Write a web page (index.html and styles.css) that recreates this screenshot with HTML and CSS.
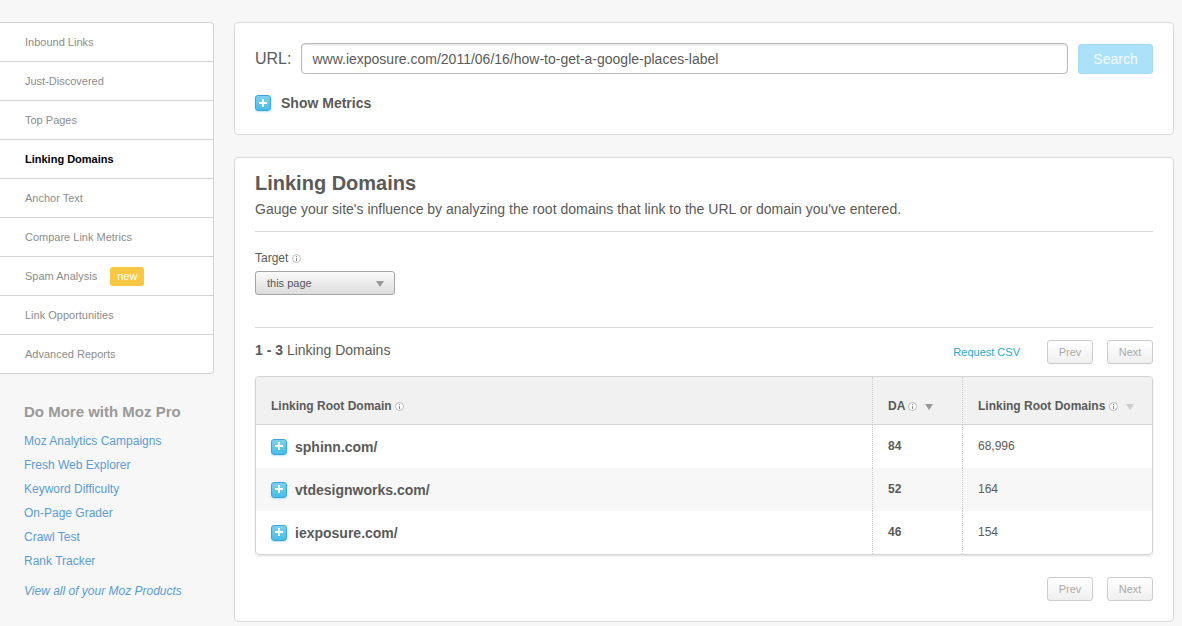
FILE: index.html
```html
<!DOCTYPE html>
<html lang="en">
<head>
<meta charset="utf-8">
<title>Linking Domains</title>
<meta name="viewport" content="width=device-width, initial-scale=1">
<link rel="stylesheet" href="styles.css">
</head>
<body>
<svg class="sprite" aria-hidden="true">
  <symbol id="info" viewBox="0 0 9 9">
    <circle cx="4.5" cy="4.5" r="4" fill="#fff" stroke="#aaa" stroke-width=".8"/>
    <path d="M4 2h1v1H4zM4 4h1v3H4z" fill="#888"/>
  </symbol>
  <symbol id="arrow" viewBox="0 0 8 6">
    <path d="M0 0h8L4 6z" fill="currentColor"/>
  </symbol>
  <symbol id="plus" viewBox="0 0 8 8">
    <path d="M3 0h2v3h3v2H5v3H3V5H0V3h3z" fill="#fff"/>
  </symbol>
</svg>
<div class="page">
  <aside class="sidebar">
    <nav>
      <ul class="nav">
        <li class="nav-item"><a class="nav-link" href="#">Inbound Links</a></li>
        <li class="nav-item"><a class="nav-link" href="#">Just-Discovered</a></li>
        <li class="nav-item"><a class="nav-link" href="#">Top Pages</a></li>
        <li class="nav-item"><a class="nav-link active" href="#" aria-current="page">Linking Domains</a></li>
        <li class="nav-item"><a class="nav-link" href="#">Anchor Text</a></li>
        <li class="nav-item"><a class="nav-link" href="#">Compare Link Metrics</a></li>
        <li class="nav-item"><a class="nav-link" href="#">Spam Analysis <span class="tag">new</span></a></li>
        <li class="nav-item"><a class="nav-link" href="#">Link Opportunities</a></li>
        <li class="nav-item"><a class="nav-link" href="#">Advanced Reports</a></li>
      </ul>
    </nav>
    <section class="more">
      <h3 class="more-title">Do More with Moz Pro</h3>
      <ul class="more-list">
        <li><a class="more-link" href="#">Moz Analytics Campaigns</a></li>
        <li><a class="more-link" href="#">Fresh Web Explorer</a></li>
        <li><a class="more-link" href="#">Keyword Difficulty</a></li>
        <li><a class="more-link" href="#">On-Page Grader</a></li>
        <li><a class="more-link" href="#">Crawl Test</a></li>
        <li><a class="more-link" href="#">Rank Tracker</a></li>
      </ul>
      <a class="more-link more-all" href="#">View all of your Moz Products</a>
    </section>
  </aside>
  <main class="main">
    <section class="card">
      <form class="search">
        <label class="search-label" for="url">URL:</label>
        <input class="search-input" id="url" type="text" value="www.iexposure.com/2011/06/16/how-to-get-a-google-places-label">
        <button class="search-button" type="button">Search</button>
      </form>
      <div class="metrics">
        <button class="plus" id="metrics-toggle" type="button" aria-label="Expand metrics"><svg class="plus-icon"><use href="#plus"/></svg></button>
        <label class="metrics-label" for="metrics-toggle">Show Metrics</label>
      </div>
    </section>
    <section class="card report">
      <h2 class="title">Linking Domains</h2>
      <p class="intro">Gauge your site's influence by analyzing the root domains that link to the URL or domain you've entered.</p>
      <div class="filters">
        <label class="filter-label" for="target">Target <svg class="info"><use href="#info"/></svg></label>
        <div class="select-wrap">
          <select class="select" id="target"><option>this page</option></select>
          <svg class="arrow select-arrow"><use href="#arrow"/></svg>
        </div>
      </div>
      <div class="results-bar">
        <p class="count"><strong>1 - 3</strong> Linking Domains</p>
        <a class="csv" href="#">Request CSV</a>
        <div class="pager">
          <button class="page-button" type="button">Prev</button>
          <button class="page-button" type="button">Next</button>
        </div>
      </div>
      <div class="table-frame">
        <table class="table">
          <thead>
            <tr>
              <th>Linking Root Domain <svg class="info"><use href="#info"/></svg></th>
              <th class="col-da">DA <svg class="info"><use href="#info"/></svg><svg class="arrow sort"><use href="#arrow"/></svg></th>
              <th class="col-root">Linking Root Domains <svg class="info"><use href="#info"/></svg><svg class="arrow sort sort-off"><use href="#arrow"/></svg></th>
            </tr>
          </thead>
          <tbody>
            <tr>
              <td><div class="domain"><button class="plus" type="button" aria-label="Expand sphinn.com"><svg class="plus-icon"><use href="#plus"/></svg></button><span>sphinn.com/</span></div></td>
              <td class="num da">84</td><td class="num">68,996</td>
            </tr>
            <tr>
              <td><div class="domain"><button class="plus" type="button" aria-label="Expand vtdesignworks.com"><svg class="plus-icon"><use href="#plus"/></svg></button><span>vtdesignworks.com/</span></div></td>
              <td class="num da">52</td><td class="num">164</td>
            </tr>
            <tr>
              <td><div class="domain"><button class="plus" type="button" aria-label="Expand iexposure.com"><svg class="plus-icon"><use href="#plus"/></svg></button><span>iexposure.com/</span></div></td>
              <td class="num da">46</td><td class="num">154</td>
            </tr>
          </tbody>
        </table>
      </div>
      <div class="pager pager-bottom">
        <button class="page-button" type="button">Prev</button>
        <button class="page-button" type="button">Next</button>
      </div>
    </section>
  </main>
</div>
</body>
</html>
```

FILE: styles.css
```css
* { box-sizing: border-box; }

body {
  margin: 0;
  background: #f7f7f7;
  color: #5a5a5a;
  font-family: "Liberation Sans", Arial, sans-serif;
  font-size: 14px;
}

a { text-decoration: none; }
button, input, select { font-family: inherit; }
h2, h3, p, ul { margin: 0; padding: 0; }
ul { list-style: none; }
.sprite { display: none; }

.page {
  display: flex;
  align-items: flex-start;
  gap: 20px;
  padding: 22px 8px 4px 0;
}

/* Sidebar */
.sidebar { flex: 0 0 214px; }

.nav {
  background: #fff;
  border: 1px solid #d3d3d3;
  border-left: 0;
  border-radius: 0 4px 4px 0;
}
.nav-item + .nav-item { border-top: 1px solid #d3d3d3; }
.nav-link {
  display: flex;
  align-items: center;
  gap: 13px;
  height: 38px;
  padding-left: 25px;
  color: #8c8c8c;
  font-size: 11px;
}
.nav-link.active { color: #000; font-weight: bold; }
.tag {
  padding: 0 7px;
  border-radius: 3px;
  background: #f8c744;
  color: #fff;
  line-height: 19px;
}

.more { padding: 28px 0 0 24px; }
.more-title {
  margin-bottom: 7px;
  color: #999;
  font-size: 15px;
  line-height: 20px;
}
.more-link {
  display: block;
  color: #5b9bd5;
  font-size: 12px;
  line-height: 24px;
}
.more-all { margin-top: 6px; font-style: italic; }

/* Cards */
.main {
  flex: 1;
  min-width: 0;
  display: flex;
  flex-direction: column;
  gap: 22px;
}
.card {
  padding: 20px;
  background: #fff;
  border: 1px solid #d9d9d9;
  border-radius: 4px;
}
.report { padding-top: 13px; }

.search {
  display: flex;
  align-items: center;
  gap: 10px;
}
.search-label { font-size: 16px; }
.search-input {
  flex: 1;
  min-width: 0;
  height: 31px;
  padding: 0 10px;
  border: 1px solid #bbb;
  border-radius: 4px;
  box-shadow: inset 0 1px 2px #ddd;
  color: #5a5a5a;
  font-size: 14px;
}
.search-button {
  width: 75px;
  height: 30px;
  padding: 0;
  border: 1px solid #a5dbf2;
  border-radius: 3px;
  background: #ace2f9;
  color: #f4fbff;
  font-size: 14px;
}
.metrics {
  display: flex;
  align-items: center;
  gap: 10px;
  padding: 19px 0 1px;
}
.metrics-label { font-weight: bold; line-height: 20px; }

.plus {
  display: flex;
  align-items: center;
  justify-content: center;
  flex: none;
  width: 16px;
  height: 16px;
  padding: 0 0 1px;
  border: 1px solid #3aa5d6;
  border-radius: 3px;
  background: linear-gradient(#7fd0f0, #45bdea);
  box-shadow: 0 1px 2px #b5e6fa;
}
.plus-icon { width: 8px; height: 8px; }

.title { font-size: 20px; line-height: 24px; }
.intro {
  padding: 4px 0 12px;
  border-bottom: 1px solid #d9d9d9;
  line-height: 20px;
}
.filters {
  padding: 16px 0 32px;
  border-bottom: 1px solid #d9d9d9;
}
.filter-label {
  display: block;
  font-size: 12px;
  line-height: 20px;
  margin-bottom: 3px;
}
.info { width: 9px; height: 9px; vertical-align: -1px; }
.arrow { width: 8px; height: 6px; color: #999; }
.select-wrap { position: relative; width: 140px; }
.select {
  appearance: none;
  display: block;
  width: 100%;
  height: 24px;
  padding: 0 11px;
  border: 1px solid #a5a5a5;
  border-radius: 3px;
  background: linear-gradient(#fbfbfb, #dcdcdc);
  color: #555;
  font-size: 11px;
}
.select-arrow {
  position: absolute;
  top: 10px;
  right: 11px;
  pointer-events: none;
}

.results-bar {
  display: flex;
  align-items: center;
  padding: 12px 0;
}
.count { flex: 1; padding-bottom: 4px; line-height: 20px; }
.csv { margin-right: 27px; color: #2ba6d4; font-size: 11px; }
.pager {
  display: flex;
  justify-content: flex-end;
  gap: 14px;
}
.page-button {
  width: 46px;
  height: 24px;
  padding: 0;
  border: 1px solid #ccc;
  border-radius: 3px;
  background: linear-gradient(#fff, #efefef);
  color: #aaa;
  font-size: 11px;
}
.pager-bottom { padding-top: 22px; }

/* Results table */
.table-frame {
  overflow: hidden;
  border: 1px solid #d3d3d3;
  border-radius: 4px;
  box-shadow: 0 1px 2px #ddd;
}
.table {
  width: 100%;
  table-layout: fixed;
  border-collapse: separate;
  border-spacing: 0;
  font-size: 12px;
}
.table th, .table td { padding: 0 15px; text-align: left; }
.table th {
  height: 48px;
  padding-top: 10px;
  border-bottom: 1px solid #d3d3d3;
  background: #f1f1f1;
  white-space: nowrap;
}
.table td { height: 43px; }
.table td.num { padding-bottom: 2px; }
.table th + th, .table td + td { border-left: 1px dotted #ccc; }
.col-da { width: 90px; }
.col-root { width: 190px; }
.table tbody tr:nth-child(even) { background: #f7f7f7; }
.da { font-weight: bold; }
.sort { margin-left: 8px; }
.sort-off { color: #ccc; }
.domain {
  display: flex;
  align-items: center;
  gap: 8px;
  font-size: 14px;
  font-weight: bold;
}
```
